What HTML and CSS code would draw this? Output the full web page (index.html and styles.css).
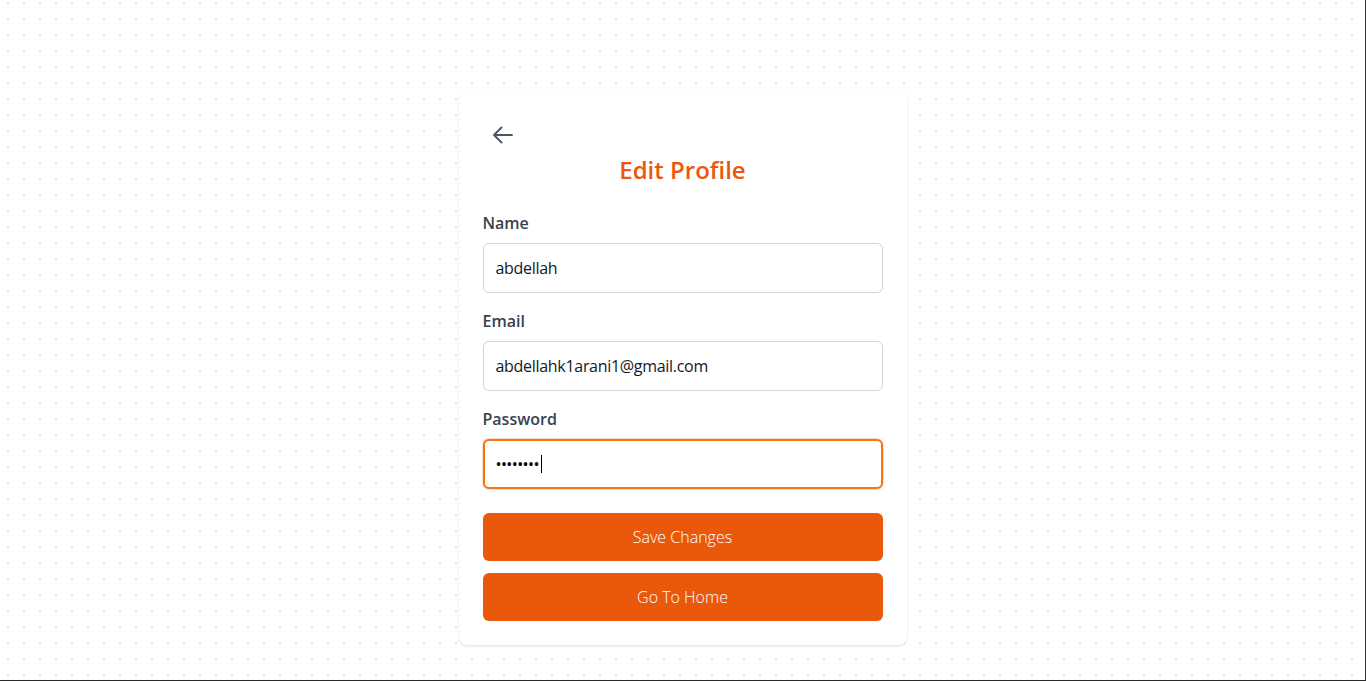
FILE: index.html
```html
<!DOCTYPE html>
<html lang="en">
<head>
<meta charset="utf-8">
<title>Edit Profile</title>
<link rel="stylesheet" href="styles.css">
</head>
<body>
<div class="page">
  <div class="card">
    <div class="card-head">
      <button class="back-btn" type="button" aria-label="Back">
        <svg width="24" height="24" viewBox="0 0 24 24" fill="none" stroke="currentColor" stroke-width="1.9" stroke-linecap="round" stroke-linejoin="round"><path d="M10.5 19.5 3 12m0 0 7.5-7.5M3 12h18"/></svg>
      </button>
      <h1 class="title">Edit Profile</h1>
    </div>
    <form class="form">
      <div class="field">
        <label class="label" for="name">Name</label>
        <input class="input" id="name" type="text" value="abdellah">
      </div>
      <div class="field">
        <label class="label" for="email">Email</label>
        <input class="input" id="email" type="email" value="abdellahk1arani1@gmail.com">
      </div>
      <div class="field">
        <label class="label" for="password">Password</label>
        <div class="input-wrap">
          <input class="input input-focused" id="password" type="password" value="12345678">
          <span class="caret"></span>
        </div>
      </div>
      <div class="actions">
        <button class="btn" type="button">Save Changes</button>
        <button class="btn" type="button">Go To Home</button>
      </div>
    </form>
  </div>
</div>
</body>
</html>
```

FILE: styles.css
```css
* { box-sizing: border-box; }
html, body { margin: 0; padding: 0; }
body {
  font-family: "Open Sans", "Noto Sans", sans-serif;
  color: #1f2937;
}
.page {
  width: 1366px;
  height: 681px;
  border-right: 1px solid #2b2b2b;
  border-bottom: 1px solid #2b2b2b;
  background-color: #ffffff;
  background-image: radial-gradient(circle, #e3e3e3 1.1px, transparent 1.3px);
  background-size: 16px 16px;
  background-position: 0 -5px;
  display: flex;
  justify-content: center;
  align-items: flex-start;
  padding-top: 91px;
}
.card {
  width: 448px;
  background: #ffffff;
  border-radius: 8px;
  box-shadow: 0 1px 3px rgba(0,0,0,0.09), 0 1px 2px rgba(0,0,0,0.05);
  padding: 32px 24px 24px;
}
.card-head {
  display: flex;
  flex-direction: column;
}
.back-btn {
  align-self: flex-start;
  width: 24px;
  height: 24px;
  padding: 0;
  margin-left: 8px;
  border: 0;
  background: transparent;
  color: #4b5563;
  display: flex;
  cursor: pointer;
}
.title {
  margin: 7px 0 0;
  text-align: center;
  font-size: 24px;
  line-height: 32px;
  font-weight: 600;
  color: #ea580c;
}
.form {
  margin-top: 25px;
  display: flex;
  flex-direction: column;
  gap: 16px;
}
.field {
  display: flex;
  flex-direction: column;
  gap: 8px;
}
.label {
  font-size: 16px;
  line-height: 24px;
  font-weight: 600;
  color: #374151;
}
.input-wrap {
  position: relative;
}
.input {
  height: 50px;
  width: 100%;
  border: 1px solid #d1d5db;
  border-radius: 6px;
  padding: 0 12px;
  font-family: inherit;
  font-size: 16px;
  letter-spacing: -0.3px;
  color: #111827;
  background: #ffffff;
  outline: none;
}
.input-focused {
  border: 2px solid #f97316;
  padding: 0 11px;
  letter-spacing: -0.6px;
  color: #000000;
  box-shadow: 0 0 0 1px rgba(249,115,22,0.25);
}
.caret {
  position: absolute;
  left: 58px;
  top: 16px;
  width: 1px;
  height: 18px;
  background: #000000;
}
.actions {
  margin-top: 8px;
  display: flex;
  flex-direction: column;
  gap: 12px;
}
.btn {
  height: 48px;
  width: 100%;
  border: 0;
  border-radius: 6px;
  background: #ea580c;
  color: #ffffff;
  font-family: inherit;
  font-size: 16px;
  font-weight: 300;
  cursor: pointer;
}
```
